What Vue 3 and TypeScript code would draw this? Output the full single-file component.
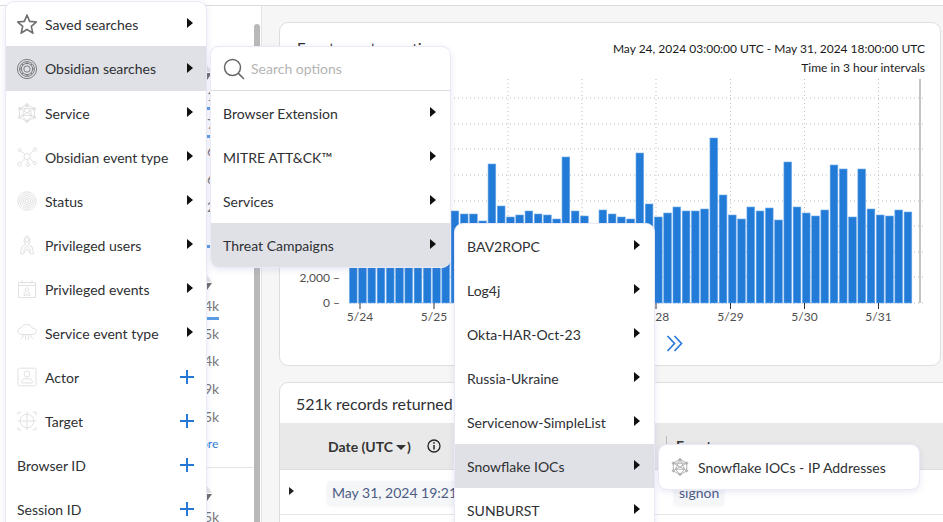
<script setup lang="ts">
const circle = (x: number, y: number, r: number) =>
  `M${x - r} ${y}a${r} ${r} 0 1 0 ${2 * r} 0a${r} ${r} 0 1 0 ${-2 * r} 0`

const rings = (rs: number[]) => rs.map((r) => circle(10, 10, r)).join('')

const network =
  'M10 1.5L17.5 5.7V14.3L10 18.5L2.5 14.3V5.7ZM10 1.5L5 12.5H15ZM10 18.5L5 12.5M10 18.5L15 12.5M2.5 5.7L15 12.5M17.5 5.7L5 12.5M2.5 14.3L5 12.5M17.5 14.3L15 12.5M2.5 5.7L17.5 5.7' +
  circle(10, 1.8, 1.2) + circle(10, 18.2, 1.2) + circle(2.5, 5.7, 1.2) + circle(17.5, 5.7, 1.2) + circle(2.5, 14.3, 1.2) + circle(17.5, 14.3, 1.2)

const icons: Record<string, string> = {
  star: 'M10 1.2L12.7 7.4L19.3 8L14.3 12.4L15.8 19L10 15.5L4.2 19L5.7 12.4L.7 8L7.3 7.4Z',
  obsidian: rings([9.6, 7.4, 5.6, 3.2]) + 'M10 2.6V4.4M10 15.6V17.4M2.6 10H4.4M15.6 10H17.4M4.8 4.8L6 6M14 14L15.2 15.2M4.8 15.2L6 14M14 6L15.2 4.8',
  network,
  hub:
    circle(10, 9.5, 3) + circle(2.5, 17.2, 1.8) + circle(18, 2.5, 1.6) + circle(2.6, 3, 1.5) + circle(17.8, 16, 1.6) + circle(11, 17.8, 1.6) +
    'M7.8 11.6L3.8 15.9M12.2 7.5L16.8 3.6M7.9 7.4L3.7 4.1M12.6 11L16.4 15M10.4 12.5L10.9 16.2',
  rings: rings([1.8, 3.6, 5.4, 7.2, 9.2]),
  users:
    'M7 6C7 2.8 8.4 1 10 1S13 2.8 13 6C13 7.6 12.2 8.8 11.4 9.4L15.2 12L16.6 18.8H13.4L10 13.8L6.6 18.8H3.4L4.8 12L8.6 9.4C7.8 8.8 7 7.6 7 6Z' +
    'M8.4 5C8.4 3.6 9 2.8 10 2.8S11.6 3.6 11.6 5V7H8.4ZM10 10.6L7.6 13.4L6.6 17.4M10 10.6L12.4 13.4L13.4 17.4',
  calendar:
    'M1.5 3.5H18.5V18.5H1.5ZM1.5 6.5H18.5M5 1.5V4.5M15 1.5V4.5M8.4 11C8.4 9.5 9 8.8 10 8.8S11.6 9.5 11.6 11L10.8 12.6L12.6 13.7L13 16.5H11.2L10 14.8L8.8 16.5H7L7.4 13.7L9.2 12.6Z',
  cloud:
    'M5 11.5C2.5 11.5.7 10 .7 8S2.4 4.8 4.3 5C4.9 2.8 7 1.4 9.6 1.4C12.6 1.4 14.8 3.2 15.3 5.2C17.6 5.2 19.3 6.4 19.3 8.4S17.6 11.5 15.2 11.5ZM6 11.5V14L3.5 16M8.5 11.5V17M11.5 11.5V17M14 11.5V14L16.5 16',
  actor:
    'M2.5 1.2H17.5Q19 1.2 19 2.7V17.3Q19 18.8 17.5 18.8H2.5Q1 18.8 1 17.3V2.7Q1 1.2 2.5 1.2Z' + circle(10, 7, 3) +
    'M4.5 15.2C4.5 12.4 7 11.6 10 11.6S15.5 12.4 15.5 15.2Q15.5 16 14.5 16H5.5Q4.5 16 4.5 15.2Z',
  target:
    circle(10, 10, 6.8) + 'M10 1V19M1 10H19M1 4V1.2H4M16 1.2H19V4M1 16V18.8H4M16 18.8H19V16',
}

interface Item { label: string; icon?: string; stroke?: string; add?: boolean; active?: boolean }

const faint = '#dedede'
const mainItems: Item[] = [
  { label: 'Saved searches', icon: 'star', stroke: '#6f6f6f' },
  { label: 'Obsidian searches', icon: 'obsidian', stroke: '#6f7075', active: true },
  { label: 'Service', icon: 'network', stroke: faint },
  { label: 'Obsidian event type', icon: 'hub', stroke: faint },
  { label: 'Status', icon: 'rings', stroke: faint },
  { label: 'Privileged users', icon: 'users', stroke: faint },
  { label: 'Privileged events', icon: 'calendar', stroke: faint },
  { label: 'Service event type', icon: 'cloud', stroke: faint },
  { label: 'Actor', icon: 'actor', stroke: faint, add: true },
  { label: 'Target', icon: 'target', stroke: faint, add: true },
  { label: 'Browser ID', add: true },
  { label: 'Session ID', add: true },
]
const secondItems: Item[] = [
  { label: 'Browser Extension' },
  { label: 'MITRE ATT&CK™' },
  { label: 'Services' },
  { label: 'Threat Campaigns', active: true },
]
const thirdItems: Item[] = [
  { label: 'BAV2ROPC' },
  { label: 'Log4j' },
  { label: 'Okta-HAR-Oct-23' },
  { label: 'Russia-Ukraine' },
  { label: 'Servicenow-SimpleList' },
  { label: 'Snowflake IOCs', active: true },
  { label: 'SUNBURST' },
]

const railA = [
  { v: '1k', bar: 14 }, { v: '7k', bar: 9 }, { v: '6k', bar: 0 }, { v: '6k', bar: 0 }, { v: '2k', bar: 0 }, { v: '', bar: 4 },
]
const railB = [
  { v: '4k', bar: 15 }, { v: '5k', bar: 0 }, { v: '4k', bar: 0 }, { v: '9k', bar: 0 }, { v: '5k', bar: 0 },
]

// chart geometry: origin of the svg is at page (290, 79)
const ox = 290
const oy = 79
const base = 303 - oy
const tops = [
  211, 214, 214, 221, 164, 206, 217, 215, 211, 214, 215, 219, 157, 211, 216, 303, 210, 214, 217, 219, 153, 204, 217, 213,
  207, 211, 211, 209, 138, 195, 215, 219, 207, 211, 208, 220, 162, 207, 213, 216, 210, 165, 169, 217, 169, 209, 215, 216, 210, 212,
]
const early = [212, 210, 214, 212, 209, 213, 211, 214, 210, 212, 211]
const bars = [...early, ...tops].map((t, i) => ({
  x: 349.4 + i * 9.245 - ox,
  y: t - oy,
  h: 303 - t,
}))
const hLines = [98, 124, 149, 175, 201, 226, 252, 277, 303].map((y) => y - oy)
const vLines = [360, 434, 508, 582, 656, 730.5, 804.5, 878.5].map((x) => x - ox)
const dates = ['5/24', '5/25', '5/26', '5/27', '5/28', '5/29', '5/30', '5/31'].map((label, i) => ({
  label,
  x: vLines[i],
}))
</script>

<template>
  <div class="page">
    <div class="topbar"></div>
    <div class="body">
      <aside class="rail">
        <div class="rail-content">
          <div class="sort first"><i class="up"></i><i class="down"></i></div>
          <div v-for="(r, i) in railA" :key="'a' + i" class="rail-row shifted">
            <span>{{ r.v }}</span>
            <b v-if="r.bar" :style="{ width: r.bar + 'px' }"></b>
          </div>
          <div class="sort second"><i class="up"></i><i class="down"></i></div>
          <div v-for="(r, i) in railB" :key="'b' + i" class="rail-row">
            <span>{{ r.v }}</span>
            <b v-if="r.bar" :style="{ width: r.bar + 'px' }"></b>
          </div>
          <div class="rail-more">More</div>
          <div class="rail-divider"></div>
          <div class="sort third"><i class="up"></i><i class="down"></i></div>
          <div class="rail-row"><span>5k</span></div>
        </div>
        <div class="scrollbar"></div>
      </aside>

      <main class="main">
        <section class="card chart-card">
          <header class="chart-head">
            <h2 class="title">Event count over time</h2>
            <div class="range">
              <div>May 24, 2024 03:00:00 UTC - May 31, 2024 18:00:00 UTC</div>
              <div>Time in 3 hour intervals</div>
            </div>
          </header>
          <svg class="chart" width="640" height="246" viewBox="0 0 640 246">
            <line v-for="y in hLines" :key="'h' + y" x1="60" :x2="633" :y1="y" :y2="y" class="grid" />
            <line v-for="x in vLines" :key="'v' + x" :x1="x" :x2="x" y1="0" :y2="base" class="grid" />
            <rect v-for="(b, i) in bars" :key="i" :x="b.x" :y="b.y" width="7.7" :height="b.h" class="bar" />
            <line x1="630" x2="630" y1="0" :y2="base" class="cursor" />
            <text x="50" :y="base - 21" class="axis" text-anchor="end">2,000 –</text>
            <text x="50" :y="base + 4" class="axis" text-anchor="end">0 –</text>
            <g v-for="d in dates" :key="d.label">
              <line :x1="d.x" :x2="d.x" :y1="base" :y2="base + 6" class="tick" />
              <text :x="d.x" :y="base + 18" class="axis" text-anchor="middle">{{ d.label }}</text>
            </g>
          </svg>
          <div class="pager">
            <svg width="17" height="17" viewBox="0 0 17 17">
              <path d="M1.5 1L8.5 8.5L1.5 16M8.5 1L15.5 8.5L8.5 16" fill="none" stroke="#2b7bd8" stroke-width="1.7" />
            </svg>
          </div>
        </section>

        <section class="card table-card">
          <h2 class="records">521k records returned</h2>
          <div class="thead">
            <div class="th-date">
              <span>Date (UTC</span><i class="caret"></i><span>)</span>
              <svg class="info" width="14" height="14" viewBox="0 0 14 14">
                <circle cx="7" cy="7" r="6" fill="none" stroke="#222" stroke-width="1.3" />
                <path d="M7 6V10.5" stroke="#222" stroke-width="1.5" />
                <circle cx="7" cy="3.9" r=".9" fill="#222" />
              </svg>
            </div>
            <div class="th-event">Event</div>
          </div>
          <div class="trow">
            <i class="expand"></i>
            <div class="td-date"><span class="chip">May 31, 2024 19:21:04</span></div>
            <div class="td-event"><span class="chip">signon</span></div>
          </div>
        </section>
      </main>
    </div>

    <nav class="menu menu-main">
      <div v-for="item in mainItems" :key="item.label" class="item" :class="{ active: item.active }">
        <svg v-if="item.icon" class="icon" width="20" height="20" viewBox="0 0 20 20">
          <path :d="icons[item.icon]" fill="none" :stroke="item.stroke" :stroke-width="item.icon === 'star' ? 1.6 : 0.9" />
        </svg>
        <span class="label">{{ item.label }}</span>
        <span v-if="item.add" class="plus"></span>
        <span v-else class="arrow"></span>
      </div>
    </nav>

    <nav class="menu menu-second">
      <div class="search">
        <svg width="22" height="22" viewBox="0 0 22 22">
          <circle cx="9.5" cy="9.5" r="8" fill="none" stroke="#666" stroke-width="1.5" />
          <path d="M15.4 15.4L21 21" stroke="#666" stroke-width="1.5" />
        </svg>
        <span>Search options</span>
      </div>
      <div v-for="item in secondItems" :key="item.label" class="item" :class="{ active: item.active }">
        <span class="label">{{ item.label }}</span>
        <span class="arrow"></span>
      </div>
    </nav>

    <nav class="menu menu-third">
      <div v-for="item in thirdItems" :key="item.label" class="item" :class="{ active: item.active }">
        <span class="label">{{ item.label }}</span>
        <span class="arrow"></span>
      </div>
    </nav>

    <nav class="menu menu-fourth">
      <svg width="18" height="20" viewBox="0 0 20 20">
        <path :d="icons.network" fill="none" stroke="#a9a9a9" stroke-width="1" />
      </svg>
      <span>Snowflake IOCs - IP Addresses</span>
    </nav>
  </div>
</template>

<style scoped>
.page {
  position: relative;
  width: 943px;
  height: 522px;
  overflow: hidden;
  display: flex;
  flex-direction: column;
  background: #f6f6f6;
  font-family: Lato, "Liberation Sans", sans-serif;
  font-size: 14px;
  color: #2e3033;
}
.topbar {
  height: 5px;
  flex: none;
  background: #fff;
  border-bottom: 1px solid #dcdcdc;
}
.body {
  flex: 1;
  min-height: 0;
  display: flex;
}
.rail {
  width: 262px;
  flex: none;
  display: flex;
  background: #fff;
  border-right: 1px solid #e4e4e4;
  box-sizing: border-box;
  overflow: hidden;
}
.rail-content {
  flex: 1;
  padding-left: 204px;
  color: #777;
}
.scrollbar {
  width: 6px;
  flex: none;
  margin: 18px 1px 0 0;
  background: #b9b9b9;
  border-radius: 3px 3px 0 0;
}
.sort {
  height: 16px;
  margin-bottom: 5px;
  display: flex;
  flex-direction: column;
  gap: 1px;
}
.sort.first { margin-top: 59px; }
.sort.second { margin-top: 22.8px; }
.sort.third { margin-top: 18px; }
.up, .down {
  width: 0;
  height: 0;
  border-left: 5px solid transparent;
  border-right: 5px solid transparent;
  margin-left: -2px;
}
.up { border-bottom: 7px solid #e3e3e3; }
.down { border-top: 7px solid #6e6e6e; }
.rail-row {
  height: 27.7px;
  position: relative;
  line-height: 20px;
}
.rail-row.shifted { padding-left: 3px; }
.rail-row b {
  display: block;
  height: 3px;
  margin-top: 1px;
  background: #5b9ee6;
}
.rail-row span { display: block; height: 20px; }
.rail-more {
  height: 20px;
  line-height: 20px;
  font-size: 12px;
  color: #2b7bd8;
  margin-left: -14px;
}
.rail-divider {
  height: 1px;
  margin: 12.5px 0 0 0;
  background: #e6e6e6;
}
.main {
  flex: 1;
  min-width: 0;
  padding: 16px 0 0 17px;
  display: flex;
  flex-direction: column;
  gap: 16px;
  overflow: hidden;
}
.card {
  background: #fff;
  border: 1px solid #dedede;
  border-radius: 9px;
  flex: none;
}
.chart-card {
  width: 662px;
  height: 344px;
  box-sizing: border-box;
  padding: 16px 0 0 10px;
}
.chart-head {
  display: flex;
  justify-content: space-between;
  padding: 0 15px 0 7px;
  margin-bottom: 2px;
}
.title {
  margin: 0;
  font-size: 15px;
  line-height: 19px;
  font-weight: 400;
}
.range {
  text-align: right;
  font-size: 12px;
  line-height: 19px;
  color: #1a1a1a;
}
.chart { display: block; }
.grid {
  stroke: #bdbdbd;
  stroke-width: 1;
  stroke-dasharray: 1 3;
}
.bar {
  fill: #237bd8;
  stroke: #6faae9;
  stroke-width: .6;
}
.cursor {
  stroke: #c4c4c4;
  stroke-width: 2;
}
.tick { stroke: #333; stroke-width: 1; }
.axis {
  font-family: Lato, "Liberation Sans", sans-serif;
  font-size: 12px;
  fill: #505050;
}
.pager {
  margin: 10px 0 0 376px;
  height: 17px;
}
.pager svg { display: block; }
.table-card {
  width: 690px;
  height: 200px;
  overflow: hidden;
}
.records {
  margin: 0;
  height: 40px;
  padding-left: 16px;
  font-size: 16px;
  line-height: 42px;
  font-weight: 400;
}
.thead {
  height: 46px;
  display: flex;
  align-items: center;
  background: #e9e9e9;
  border-bottom: 1px solid #dcdcdc;
  font-weight: 700;
  color: #333;
}
.th-date {
  width: 338px;
  margin-left: 48px;
  flex: none;
  display: flex;
  align-items: center;
}
.caret {
  width: 0;
  height: 0;
  margin: 2px 1px 0 3px;
  border-left: 5px solid transparent;
  border-right: 5px solid transparent;
  border-top: 5px solid #333;
}
.info { margin-left: 16px; }
.th-event {
  height: 20px;
  line-height: 20px;
  border-left: 1px solid #bdbdbd;
  padding-left: 9px;
}
.trow {
  height: 44px;
  display: flex;
  align-items: center;
  border-bottom: 1px solid #e6e6e6;
}
.expand {
  flex: none;
  width: 0;
  height: 0;
  margin: -3px 0 0 9px;
  border-top: 4px solid transparent;
  border-bottom: 4px solid transparent;
  border-left: 5px solid #222;
}
.td-date {
  width: 347px;
  margin-left: 33px;
  flex: none;
}
.td-event { flex: none; }
.chip {
  display: inline-block;
  height: 24px;
  line-height: 24px;
  padding: 0 5px;
  background: #f5f6f8;
  border-radius: 4px;
  box-shadow: 0 1px 3px rgba(120, 130, 160, .12);
  color: #4d5b85;
  white-space: nowrap;
  margin-top: 2px;
}
.menu {
  position: absolute;
  background: #fff;
  border: 1px solid #e9e9f7;
  border-radius: 9px;
  box-shadow: 0 2px 6px rgba(120, 120, 190, .16);
  box-sizing: border-box;
  overflow: hidden;
}
.menu-main {
  left: 5px;
  top: 1px;
  width: 202px;
  height: 560px;
}
.menu-second {
  left: 210px;
  top: 46px;
  width: 241px;
  height: 222px;
}
.menu-third {
  left: 454px;
  top: 223px;
  width: 201px;
  height: 340px;
}
.menu-fourth {
  left: 658px;
  top: 444px;
  width: 262px;
  height: 46px;
  display: flex;
  align-items: center;
  gap: 9px;
  padding-left: 12px;
}
.item {
  height: 44px;
  display: flex;
  align-items: center;
  padding: 0 13px 0 11px;
  box-sizing: border-box;
}
.menu-main .item.active { height: 45px; }
.menu-second .item { padding: 0 14px 0 12px; }
.menu-third .item { padding: 0 14px 0 12px; }
.item.active { background: #e0e1e6; }
.icon {
  flex: none;
  margin-right: 8px;
}
.label { flex: 1; white-space: nowrap; }
.arrow {
  flex: none;
  width: 0;
  height: 0;
  margin-top: -2px;
  border-top: 5px solid transparent;
  border-bottom: 5px solid transparent;
  border-left: 6px solid #111;
}
.plus {
  position: relative;
  flex: none;
  width: 14px;
  height: 14px;
  margin-right: -1px;
}
.plus::before,
.plus::after {
  content: "";
  position: absolute;
  background: #2479d7;
}
.plus::before { left: 0; right: 0; top: 6px; height: 2px; }
.plus::after { top: 0; bottom: 0; left: 6px; width: 2px; }
.search {
  height: 43px;
  display: flex;
  align-items: center;
  gap: 6px;
  padding-left: 12px;
  border-bottom: 1px solid #dddde3;
  color: #b5b5b5;
}
.search svg { flex: none; }
</style>

<style>
html, body { margin: 0; }
</style>
